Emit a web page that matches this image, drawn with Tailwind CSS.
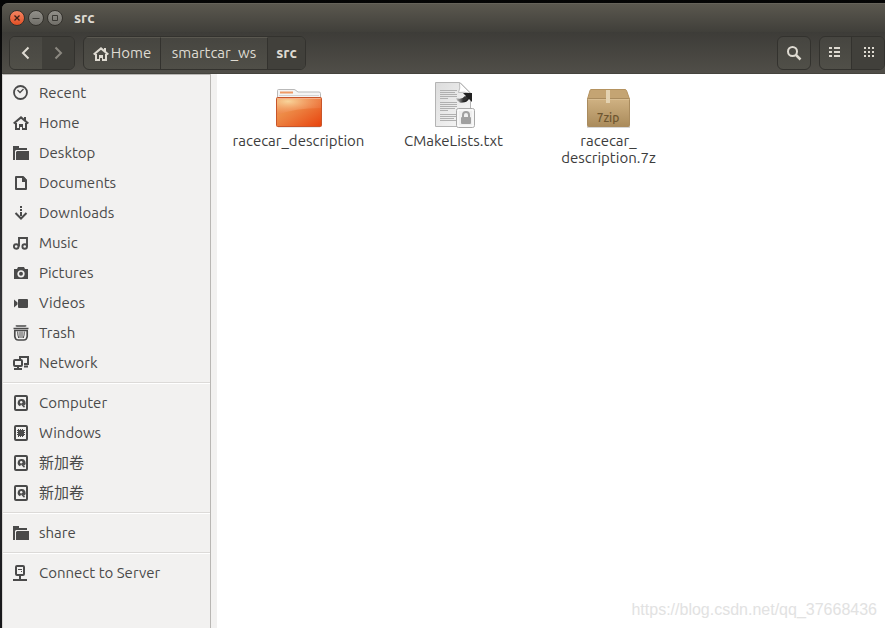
<!DOCTYPE html>
<html lang="en">
<head>
  <meta charset="UTF-8" />
  <meta name="viewport" content="width=device-width, initial-scale=1.0">
  <title>src</title>
  <script src="https://cdn.jsdelivr.net/npm/@tailwindcss/browser@4"></script>
</head>
<body class="min-h-screen flex flex-col overflow-hidden bg-linear-to-b from-[#050505] via-[#35363a] to-[#17171a] pt-[3px] pl-[2px] font-['Ubuntu','Noto_Sans','Noto_Sans_CJK_SC',sans-serif] text-[15px] text-[#4a4a4a]">

  <!-- shared icons -->
  <svg class="hidden">
    <symbol id="home" viewBox="0 0 16 16">
      <path d="M0.700 8.600 8 2.400l7.300 6.200" fill="none" stroke="currentColor" stroke-width="2" />
      <path d="M2 8h2v5h2V9h4v4h2V8h2v7H9v-3H7v3H2zM11 2h2v4h-2z" fill="currentColor" />
    </symbol>
    <symbol id="folder" viewBox="0 0 16 16">
      <path d="M0 1h6v2h8v2H3L2 6v9H0z" fill="currentColor" />
      <path d="M4 6h12v9H3V7z" fill="currentColor" />
    </symbol>
    <symbol id="disk" viewBox="0 0 16 16">
      <rect x="2" y="1" width="12" height="14" rx="1" fill="none" stroke="currentColor" stroke-width="2" />
      <path d="M8.500 4a3.800 3.800 0 0 0-1.500 7.300L8.500 9l3 1.500A3.800 3.800 0 0 0 8.500 4z" fill="currentColor" />
      <circle cx="8.200" cy="7.300" r="1.200" fill="#f2f1f0" />
      <path d="m8.500 9 3 3.200" stroke="currentColor" stroke-width="1.500" />
    </symbol>
  </svg>

  <main class="flex-1 flex flex-col rounded-tl-md bg-[#45443f]">
    <header class="h-[29px] flex items-center gap-[3px] pl-[7px] rounded-tl-md border-t border-[#66635a] bg-linear-to-b from-[#5b584f] to-[#403f3a]">
      <button aria-label="Close" class="size-4 rounded-full border border-[#33312c] bg-linear-to-b from-[#f58461] to-[#e24f22] text-[#3c2118]">
        <svg viewBox="0 0 14 14" class="block"><path d="m4.500 4.500 5 5m0-5-5 5" stroke="currentColor" stroke-width="1.300" /></svg>
      </button>
      <button aria-label="Minimize" class="size-4 rounded-full border border-[#33312c] bg-linear-to-b from-[#92908a] to-[#716f69] text-[#3a3934]">
        <svg viewBox="0 0 14 14" class="block"><path d="M3.500 7.500h7" stroke="currentColor" /></svg>
      </button>
      <button aria-label="Maximize" class="size-4 rounded-full border border-[#33312c] bg-linear-to-b from-[#92908a] to-[#716f69] text-[#3a3934]">
        <svg viewBox="0 0 14 14" class="block"><path d="M4.500 4.500h5v5h-5z" fill="none" stroke="currentColor" /></svg>
      </button>
      <h1 class="ml-2 font-bold text-[#dfdbd2]">src</h1>
    </header>

    <nav class="h-[42px] flex items-start gap-2 pt-1 pl-[7px] border-b border-[#45443e] bg-linear-to-b from-[#3d3c38] to-[#504e48] text-[#dfdbd2]">
      <div class="h-[34px] flex rounded-md border border-[#33322e] bg-[#474641] overflow-hidden">
        <button aria-label="Back" class="w-8 flex items-center justify-center bg-linear-to-b from-[#484742] to-[#504f48]">
          <svg class="size-4" viewBox="0 0 16 16"><path d="M10.500 2.500 5 8l5.500 5.500" fill="none" stroke="currentColor" stroke-width="2" /></svg>
        </button>
        <button aria-label="Forward" class="w-8 flex items-center justify-center bg-[#403f3a] text-[#8b8880]">
          <svg class="size-4" viewBox="0 0 16 16"><path d="M5.500 2.500 11 8l-5.500 5.500" fill="none" stroke="currentColor" stroke-width="2" /></svg>
        </button>
      </div>

      <div class="h-[34px] flex rounded-md border border-[#33322e] bg-linear-to-b from-[#464540] to-[#504f48] divide-x divide-[#33322e] overflow-hidden">
        <button class="w-[77px] flex items-center justify-center gap-0.5 border-t border-t-[#5a5850]"><svg class="size-4"><use href="#home" /></svg>Home</button>
        <button class="w-[107px] border-t border-t-[#5a5850]">smartcar_ws</button>
        <button class="w-[37px] bg-[#41403b] font-bold">src</button>
      </div>

      <button aria-label="Search" class="ml-auto h-[34px] w-[34px] flex items-center justify-center rounded-md border border-[#33322e] bg-linear-to-b from-[#464540] to-[#504f48]">
        <svg class="size-4" viewBox="0 0 16 16"><circle cx="6.500" cy="6.500" r="4.500" fill="none" stroke="currentColor" stroke-width="2" /><path d="m10 10 4.500 4.500" stroke="currentColor" stroke-width="2.500" /></svg>
      </button>
      <div class="h-[34px] flex rounded-md border border-[#33322e] bg-linear-to-b from-[#464540] to-[#504f48] divide-x divide-[#33322e] overflow-hidden">
        <button aria-label="List view" class="w-8 flex items-center justify-center">
          <svg class="size-4" viewBox="0 0 16 16" fill="currentColor"><path d="M1 2h3v2H1zM6 2h6v2H6zM1 6h3v2H1zM6 6h6v2H6zM1 10h3v2H1zM6 10h6v2H6z" /></svg>
        </button>
        <button aria-label="Icon view" class="w-8 flex items-center justify-center bg-[#41403b]">
          <svg class="size-4" viewBox="0 0 16 16" fill="currentColor"><path d="M4 2h2v2H4zM8 2h2v2H8zM12 2h2v2h-2zM4 6h2v2H4zM8 6h2v2H8zM12 6h2v2h-2zM4 10h2v2H4zM8 10h2v2H8zM12 10h2v2h-2z" /></svg>
        </button>
      </div>
    </nav>

    <div class="flex-1 flex bg-[#f2f1f0]">
      <aside class="w-[209px] shrink-0 pt-[3px] border-t border-l border-r border-[#b8b6b3] border-l-[#d8d6d3]">
        <ul>
          <li><a href="#" class="h-[30px] flex items-center gap-[10px] pl-[10px]">
            <svg class="size-4" viewBox="0 0 16 16" fill="none" stroke="currentColor"><circle cx="7.500" cy="7.500" r="6.500" stroke-width="1.800" /><path d="M4.500 5 7 7.500 10.500 4" stroke-width="1.300" /></svg>
            Recent</a></li>
          <li><a href="#" class="h-[30px] flex items-center gap-[10px] pl-[10px]">
            <svg class="size-4"><use href="#home" /></svg>
            Home</a></li>
          <li><a href="#" class="h-[30px] flex items-center gap-[10px] pl-[10px]">
            <svg class="size-4"><use href="#folder" /></svg>
            Desktop</a></li>
          <li><a href="#" class="h-[30px] flex items-center gap-[10px] pl-[10px]">
            <svg class="size-4" viewBox="0 0 16 16"><path d="M3 2h7l3 3.500V14H3z" fill="none" stroke="currentColor" stroke-width="2" stroke-linejoin="round" /><path d="M9 2v5h5V5l-3-3z" fill="currentColor" /></svg>
            Documents</a></li>
          <li><a href="#" class="h-[30px] flex items-center gap-[10px] pl-[10px]">
            <svg class="size-4" viewBox="0 0 16 16"><path d="M7 1h2v2H7zM7 4h2v2H7zM7 7h2v4H7z" fill="currentColor" /><path d="m2.500 8 5.500 5.500L13.500 8" fill="none" stroke="currentColor" stroke-width="2" /></svg>
            Downloads</a></li>
          <li><a href="#" class="h-[30px] flex items-center gap-[10px] pl-[10px]">
            <svg class="size-4" viewBox="0 0 16 16" fill="none" stroke="currentColor" stroke-width="1.900"><circle cx="3.200" cy="11.500" r="2.300" /><circle cx="11.700" cy="11.500" r="2.300" /><path d="M6 11.500V3h8v8.500" /></svg>
            Music</a></li>
          <li><a href="#" class="h-[30px] flex items-center gap-[10px] pl-[10px]">
            <svg class="size-4" viewBox="0 0 16 16"><path d="M1 4h3l1-2h6l1 2h3v10H1z" fill="currentColor" /><circle cx="8" cy="8.800" r="2.800" fill="none" stroke="#f2f1f0" stroke-width="1.700" /></svg>
            Pictures</a></li>
          <li><a href="#" class="h-[30px] flex items-center gap-[10px] pl-[10px]">
            <svg class="size-4" viewBox="0 0 16 16" fill="currentColor"><path d="M1 4.500 4.500 7.500v2L1 12.500z" /><rect x="5" y="4" width="10" height="9" rx="1" /></svg>
            Videos</a></li>
          <li><a href="#" class="h-[30px] flex items-center gap-[10px] pl-[10px]">
            <svg class="size-4" viewBox="0 0 16 16" fill="none" stroke="currentColor"><path d="M3.500 1.500V1h9v.5M0.500 3.500h15" stroke-width="1.600" /><path d="M1 5.500h14M1.800 6v5.500q.5 3.500 3.500 3.500h5.400q3 0 3.500-3.500V6" stroke-width="1.700" /><path d="M4.700 6.500q0 4 1 6.500M7 6.500V13M9 6.500V13M11.300 6.500q0 4-1 6.500" /></svg>
            Trash</a></li>
          <li><a href="#" class="h-[30px] flex items-center gap-[10px] pl-[10px]">
            <svg class="size-4" viewBox="0 0 16 16" fill="none" stroke="currentColor" stroke-width="2"><path d="M7 4V2h8v7h-4" /><rect x="1" y="5" width="8" height="6" rx="1" /><path d="M1 14h8M11 11.500h4M5 11v3" /></svg>
            Network</a></li>
        </ul>
        <hr class="my-1 h-[2px] border-t-[#dcdad8] bg-white">
        <ul>
          <li><a href="#" class="h-[30px] flex items-center gap-[10px] pl-[10px]">
            <svg class="size-4"><use href="#disk" /></svg>
            Computer</a></li>
          <li><a href="#" class="h-[30px] flex items-center gap-[10px] pl-[10px]">
            <svg class="size-4" viewBox="0 0 16 16"><rect x="2" y="1" width="12" height="14" rx="1" fill="none" stroke="currentColor" stroke-width="2" /><rect x="5" y="5" width="6" height="6" fill="currentColor" /><path d="M5.500 4v8M7.500 4v8M9.500 4v8M4 5.500h8M4 7.500h8M4 9.500h8" stroke="currentColor" /></svg>
            Windows</a></li>
          <li><a href="#" class="h-[30px] flex items-center gap-[10px] pl-[10px]">
            <svg class="size-4"><use href="#disk" /></svg>
            新加卷</a></li>
          <li><a href="#" class="h-[30px] flex items-center gap-[10px] pl-[10px]">
            <svg class="size-4"><use href="#disk" /></svg>
            新加卷</a></li>
        </ul>
        <hr class="my-1 h-[2px] border-t-[#dcdad8] bg-white">
        <a href="#" class="h-[30px] flex items-center gap-[10px] pl-[10px]">
          <svg class="size-4"><use href="#folder" /></svg>
          share</a>
        <hr class="my-1 h-[2px] border-t-[#dcdad8] bg-white">
        <a href="#" class="h-[30px] flex items-center gap-[10px] pl-[10px]">
          <svg class="size-4" viewBox="0 0 16 16" fill="none" stroke="currentColor"><rect x="3" y="1" width="8" height="9" rx="1" stroke-width="2" /><path d="M5 4.500h4M8 6.500h1" /><path d="M7 10v4" stroke-width="2" /><path d="M0 15h14" stroke-width="2" /></svg>
          Connect to Server</a>
      </aside>

      <section class="relative flex-1 ml-[6px] bg-white">
        <ul class="flex flex-wrap pt-[7px] pl-1 text-center leading-[17px] text-[#3c3c3c]">
          <li class="w-[155px] flex flex-col items-center">
            <svg class="size-12 mb-[3px]" viewBox="0 0 48 48">
              <defs>
                <linearGradient id="front" x1="0" y1="0" x2="1" y2="1"><stop offset="0" stop-color="#f0b060" /><stop offset=".5" stop-color="#ec7c3c" /><stop offset="1" stop-color="#e8420c" /></linearGradient>
                <radialGradient id="glow" cx=".25" cy=".2" r=".9"><stop offset="0" stop-color="#f8d49a" /><stop offset="1" stop-color="#ee7440" stop-opacity="0.400" /></radialGradient>
              </defs>
              <path d="M2.500 17V9.500q0-1 1-1H19q1 0 2 1l2 1.500h21q1.500 0 1.500 1.500V17z" fill="#f4f4f4" stroke="#b9b9b9" />
              <path d="M5 10.500h13v2H5z" fill="#ee9a66" />
              <path d="M4 14.500h40" stroke="#d4d4d4" />
              <path d="M3 46h42" stroke="#bbb" stroke-opacity=".6" />
              <rect x="1.500" y="16.500" width="45" height="29" rx="1" fill="url(#front)" stroke="#c8552a" />
              <path d="M2 17h44v10Q20 27 2 34z" fill="url(#glow)" />
              <path d="M2.500 17.500h43" stroke="#f6b08a" />
            </svg>
            racecar_description
          </li>
          <li class="w-[155px] flex flex-col items-center">
            <svg class="size-12 mb-[3px]" viewBox="0 0 48 48">
              <defs>
                <linearGradient id="paper" x1="0" y1="0" x2="1" y2="1"><stop offset="0" stop-color="#dcdcdc" /><stop offset="1" stop-color="#f8f8f8" /></linearGradient>
                <linearGradient id="arrow"><stop offset="0" stop-color="#ccc" /><stop offset=".6" stop-color="#333" /></linearGradient>
              </defs>
              <path d="M5.500 1.500H30L40.500 12v33.500h-35z" fill="url(#paper)" stroke="#b4b4b4" />
              <path d="M10 9.500h17M10 11.500h15M10 13.500h17M10 15.500h17M10 17.500h8M10 21.500h17M10 23.500h17M10 25.500h17M10 27.500h15M10 29.500h8M10 33.500h16M10 35.500h16M10 37.500h14M10 39.500h16" stroke="#b0b0b0" />
              <path d="M29.500 1.500q1 6-1 10 6-1 12 1z" fill="#fff" stroke="#bdbdbd" />
              <path d="M33 12h9v9l-3-3q-3 5-10 3 5-1 7-6z" fill="#222" />
              <path d="M26 17q1 4 5 4 4 0 7-4l-3-2q-3 4-9 2z" fill="url(#arrow)" />
              <rect x="26.500" y="27.500" width="18" height="19" rx="2" fill="#efefef" stroke="#a9a9a9" />
              <rect x="28" y="29" width="15" height="16" fill="none" stroke="#fff" />
              <rect x="31" y="36" width="10" height="7" rx="1" fill="#a0a0a0" />
              <path d="M33 36v-2a3 3 0 0 1 6 0v2" fill="none" stroke="#a0a0a0" stroke-width="2" />
            </svg>
            CMakeLists.txt
          </li>
          <li class="w-[155px] flex flex-col items-center">
            <svg class="size-12 mb-[3px]" viewBox="0 0 48 48">
              <defs>
                <linearGradient id="box" x1="0" y1="0" x2="0" y2="1"><stop offset="0" stop-color="#d0b283" /><stop offset="1" stop-color="#aa8b5b" /></linearGradient>
              </defs>
              <path d="M2 46h43" stroke="#999" stroke-opacity=".4" stroke-width="2" />
              <path d="M6 8.500h34q1 0 1.500 1l3 8.500H2.500l2.500-8.500q.3-1 1-1z" fill="#c4a473" stroke="#b59360" />
              <rect x="2.500" y="17.500" width="42" height="28" rx="1" fill="url(#box)" stroke="#a98b5e" />
              <path d="M3 18.500h41" stroke="#d8bd92" />
              <path d="M21 9h4v13h-4z" fill="#e3d2b2" />
              <text x="23" y="41" text-anchor="middle" font-size="12" font-weight="500" fill="#6d552f">7zip</text>
            </svg>
            racecar_<br>description.7z
          </li>
        </ul>
        <p class="absolute right-2 bottom-1.5 font-['Liberation_Sans',sans-serif] text-[16px] text-[#e2e2e2]">https://blog.csdn.net/qq_37668436</p>
      </section>
    </div>
  </main>
</body>
</html>
